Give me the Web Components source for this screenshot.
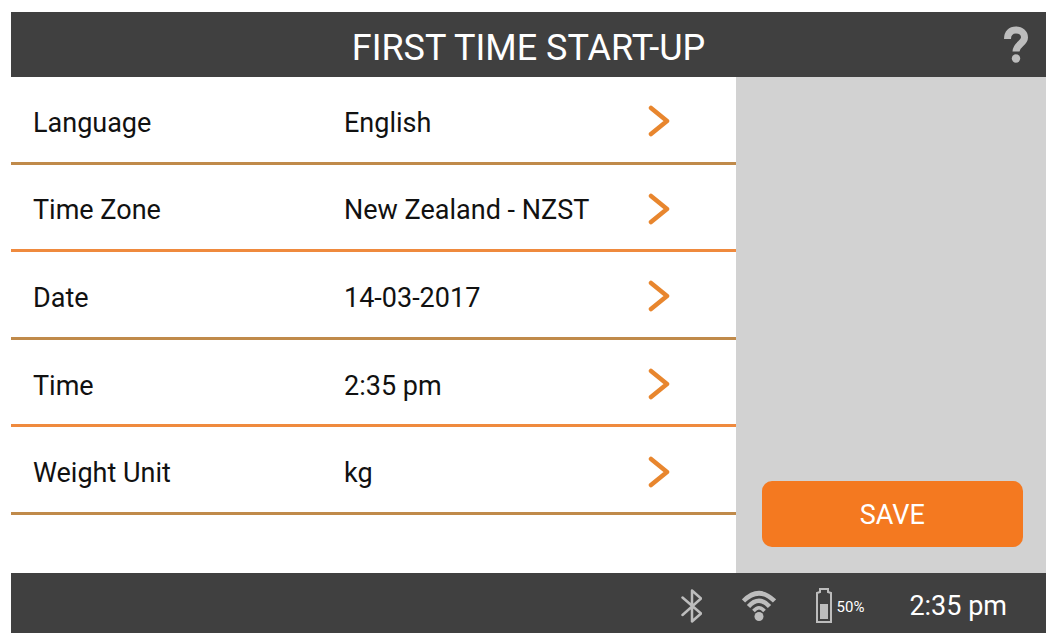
<!DOCTYPE html>
<html lang="en">
<head>
<meta charset="UTF-8">
<meta name="viewport" content="width=device-width, initial-scale=1">
<title>First Time Start-Up</title>
<style>
    body{
        margin: 0;
        background: #fff;
        color: #111;
        font-family: Roboto, "Liberation Sans", sans-serif;
        font-size: 27px;
        --bar: #404040;
        --accent: #f47920;
        --icon: #bdbdbd;
    }
</style>
</head>
<body>
<startup-screen>
    <title-bar slot="header">FIRST TIME START-UP</title-bar>
    <setting-row label="Language">English</setting-row>
    <setting-row label="Time Zone">New Zealand - NZST</setting-row>
    <setting-row label="Date">14-03-2017</setting-row>
    <setting-row label="Time">2:35 pm</setting-row>
    <setting-row label="Weight Unit">kg</setting-row>
    <action-button slot="actions">SAVE</action-button>
    <status-bar slot="footer" battery="50">2:35 pm</status-bar>
</startup-screen>

<script>
// base: every element renders its own template into an open shadow root
class BaseElement extends HTMLElement{
    constructor(){
        super();
        this.attachShadow({mode: 'open'});
    }
    connectedCallback(){
        const template = document.createElement("template");
        template.innerHTML = this.getStyle() + this.getTemplate();
        this.shadowRoot.replaceChildren(template.content.cloneNode(true));
    }
}

class StartupScreen extends BaseElement{
    getTemplate(){
        return `
            <slot name="header"></slot>
            <div class="content">
                <main><slot></slot></main>
                <aside><slot name="actions"></slot></aside>
            </div>
            <slot name="footer"></slot>
        `;
    }
    getStyle(){
        return `
            <style>
                :host{
                    display: flex;
                    flex-direction: column;
                    box-sizing: border-box;
                    min-height: 100vh;
                    padding: 12px 12px 7px 11px;
                }
                .content{
                    flex: 1;
                    display: flex;
                }
                main{
                    flex: 1;
                    display: flex;
                    flex-direction: column;
                    padding-bottom: 58px;
                }
                aside{
                    width: 30%;
                    box-sizing: border-box;
                    display: flex;
                    flex-direction: column;
                    justify-content: flex-end;
                    padding: 26px 23px 26px 26px;
                    background: #d2d2d2;
                }
            </style>
        `;
    }
}
customElements.define('startup-screen', StartupScreen);

class TitleBar extends BaseElement{
    getTemplate(){
        return `
            <h1><slot></slot></h1>
            <button type="button" aria-label="Help">
                <svg width="24" height="37" viewBox="0 0 24 37" fill="none" stroke="currentColor" stroke-width="7">
                    <path d="M3.500 13C3.500 7 7 4 12 4s8.500 3 8.500 7.500c0 6-8.500 7-8.500 14"/>
                    <circle cx="12" cy="32.500" r="4.200" fill="currentColor" stroke="none"/>
                </svg>
            </button>
        `;
    }
    getStyle(){
        return `
            <style>
                :host{
                    display: grid;
                    grid-template-columns: 1fr auto 1fr;
                    align-items: center;
                    height: 65px;
                    padding: 0 18px;
                    background: var(--bar);
                    color: #fff;
                }
                h1{
                    grid-column: 2;
                    margin: 0;
                    padding-top: 6px;
                    font-size: 36px;
                    line-height: 40px;
                    font-weight: 400;
                }
                button{
                    justify-self: end;
                    display: flex;
                    padding: 0;
                    border: 0;
                    background: none;
                    color: var(--icon);
                    cursor: pointer;
                }
            </style>
        `;
    }
}
customElements.define('title-bar', TitleBar);

class SettingRow extends BaseElement{
    getTemplate(){
        return `
            <button type="button">
                <span>${this.getAttribute('label')}</span>
                <span><slot></slot></span>
                <svg width="22" height="32" viewBox="0 0 22 32" fill="none" stroke="#e8862e" stroke-width="4.500" stroke-linecap="round" stroke-linejoin="round">
                    <path d="M3 3l16 13L3 29"/>
                </svg>
            </button>
        `;
    }
    getStyle(){
        return `
            <style>
                :host{
                    flex: 1;
                    display: flex;
                    box-sizing: border-box;
                    border-bottom: 3px solid #c08a4a;
                }
                :host(:nth-of-type(even)){
                    border-bottom-color: #ef8a3e;
                }
                button{
                    flex: 1;
                    display: grid;
                    grid-template-columns: 311px 1fr auto;
                    align-items: center;
                    padding: 4px 66px 0 22px;
                    border: 0;
                    background: none;
                    color: inherit;
                    font: inherit;
                    line-height: 32px;
                    text-align: left;
                    cursor: pointer;
                }
                span{
                    padding-top: 3px;
                }
            </style>
        `;
    }
}
customElements.define('setting-row', SettingRow);

class ActionButton extends BaseElement{
    getTemplate(){
        return `<button type="button"><slot></slot></button>`;
    }
    getStyle(){
        return `
            <style>
                :host{
                    display: block;
                }
                button{
                    width: 100%;
                    padding: 18px 0 16px;
                    border: 0;
                    border-radius: 10px;
                    background: var(--accent);
                    color: #fff;
                    font: inherit;
                    line-height: 32px;
                    cursor: pointer;
                }
            </style>
        `;
    }
}
customElements.define('action-button', ActionButton);

class StatusBar extends BaseElement{
    getTemplate(){
        const battery = this.getAttribute('battery');
        const level = 30 * battery / 100;
        return `
            <svg width="22" height="34" viewBox="0 0 22 34" fill="none" stroke="currentColor" stroke-width="2.500" stroke-linejoin="round" stroke-linecap="round">
                <path d="M2.500 8.500L21 24.500 12 32.500V1.500l9 8L2.500 26"/>
            </svg>
            <svg width="34" height="34" viewBox="0 0 34 34" fill="none" stroke="currentColor" stroke-width="4.500">
                <path d="M1.500 12Q17-3.500 32.500 12"/>
                <path d="M6.500 17.500Q17 6 27.500 17.500"/>
                <path d="M11.500 22Q17 15.500 22.500 22" stroke-width="3.500"/>
                <circle cx="17" cy="27.500" r="4.500" fill="currentColor" stroke="none"/>
            </svg>
            <div class="battery">
                <svg width="16" height="35" viewBox="0 0 16 35" fill="none" stroke="currentColor" stroke-width="2">
                    <path d="M1 34V5L4 4V1h8v3l3 1v29z"/>
                    <rect x="4" y="${31 - level}" width="8" height="${level}" fill="currentColor" stroke="none"/>
                </svg>
                <span>${battery}%</span>
            </div>
            <time><slot></slot></time>
        `;
    }
    getStyle(){
        return `
            <style>
                :host{
                    display: flex;
                    justify-content: flex-end;
                    align-items: center;
                    gap: 40px;
                    height: 60px;
                    padding: 5px 39px 0 22px;
                    box-sizing: border-box;
                    background: var(--bar);
                    color: #fff;
                }
                svg{
                    color: var(--icon);
                }
                .battery{
                    display: flex;
                    align-items: center;
                    gap: 5px;
                    margin-right: 5px;
                    font-size: 15px;
                }
                .battery span{
                    padding-top: 2px;
                }
                time{
                    line-height: 32px;
                }
            </style>
        `;
    }
}
customElements.define('status-bar', StatusBar);
</script>
</body>
</html>
